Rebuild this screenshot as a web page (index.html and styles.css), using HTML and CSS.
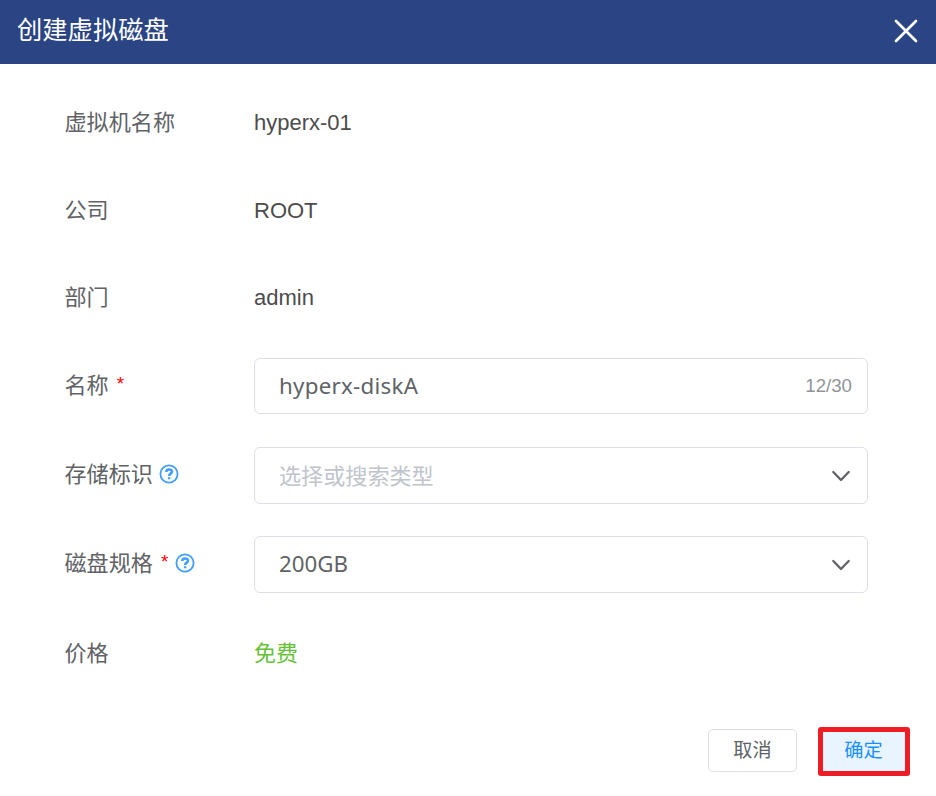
FILE: index.html
```html
<!DOCTYPE html>
<html lang="zh-CN">
<head>
<meta charset="utf-8">
<title>创建虚拟磁盘</title>
<link rel="stylesheet" href="styles.css">
</head>
<body>
<div class="dialog">
  <header class="header">
    <h1 class="title">创建虚拟磁盘</h1>
    <svg class="close" viewBox="0 0 24 24"><path d="M2 2 22 22M22 2 2 22"/></svg>
  </header>
  <main class="form">
    <div class="row"><div class="label">虚拟机名称</div><div class="value">hyperx-01</div></div>
    <div class="row"><div class="label">公司</div><div class="value">ROOT</div></div>
    <div class="row short"><div class="label">部门</div><div class="value">admin</div></div>
    <div class="row name-row"><div class="label">名称<span class="star">*</span></div>
      <div class="field"><span class="text name">hyperx-diskA</span><span class="count">12/30</span></div></div>
    <div class="row tall raised"><div class="label">存储标识<svg class="help" viewBox="0 0 20 20"><circle cx="10" cy="10" r="8.6"/><path d="M7.3 8.1C7.3 4.5 13 4.7 13 7.8 13 9.8 10.2 9.6 10.2 12"/><path class="dot" d="M8.9 13.2h2.5v2.1H8.9z"/></svg></div>
      <div class="field"><span class="placeholder">选择或搜索类型</span><svg class="arrow" viewBox="0 0 20 12"><path d="M2.3 2 10 10 17.7 2"/></svg></div></div>
    <div class="row tall raised"><div class="label">磁盘规格<span class="star">*</span><svg class="help" viewBox="0 0 20 20"><circle cx="10" cy="10" r="8.6"/><path d="M7.3 8.1C7.3 4.5 13 4.7 13 7.8 13 9.8 10.2 9.6 10.2 12"/><path class="dot" d="M8.9 13.2h2.5v2.1H8.9z"/></svg></div>
      <div class="field"><span class="text">200GB</span><svg class="arrow" viewBox="0 0 20 12"><path d="M2.3 2 10 10 17.7 2"/></svg></div></div>
    <div class="row tall"><div class="label">价格</div><div class="value free">免费</div></div>
  </main>
  <footer class="footer">
    <button class="cancel">取消</button>
    <button class="confirm">确定</button>
  </footer>
</div>
</body>
</html>
```
FILE: styles.css
```css
* { box-sizing: border-box; }
body { margin: 0; background: #fff; font-family: "Liberation Sans", "Noto Sans CJK SC", sans-serif; color: #606266; }
.dialog { width: 936px; height: 796px; overflow: hidden; }
.header { height: 64px; padding: 0 18px 4px 17px; background: #2a4484; display: flex; align-items: center; justify-content: space-between; }
.title { margin: 0; font-size: 25.3px; line-height: 36px; font-weight: 400; color: #fff; }
.close { width: 24px; height: 24px; margin-top: 2px; fill: none; stroke: #fff; stroke-width: 2.7; stroke-linecap: round; }
.form { padding: 31px 68px 0 64.5px; display: flex; flex-direction: column; gap: 32px; }
.row { height: 56px; display: grid; grid-template-columns: 189.5px 1fr; align-items: center; font-size: 22.1px; line-height: 32px; }
.short { height: 55px; padding-bottom: 1px; }
.name-row { margin-bottom: 1px; }
.tall { height: 57px; }
.raised .label { padding-bottom: 2px; }
.label { display: flex; align-items: center; height: 32px; }
.value { color: #4c4c4c; font-size: 22px; }
.free { color: #67c23a; }
.star { color: #f00; margin-left: 8px; font-size: 19px; height: 36px; }
.help { width: 20px; height: 20px; margin: 0 0 1px 6px; fill: none; stroke: #409eff; stroke-width: 1.8; }
.star + .help { margin-left: 7px; }
.help path { stroke-width: 2.6; }
.help .dot { fill: #409eff; stroke: none; }
.field { height: 100%; border: 1px solid #dcdfe6; border-radius: 6px; padding: 0 15px 0 24px; display: flex; align-items: center; justify-content: space-between; }
.text { font-family: "Noto Sans", sans-serif; font-size: 22.3px; padding-bottom: 1px; }
.name { letter-spacing: .27px; padding-bottom: 0; }
.placeholder { color: #c0c4cc; padding-top: 2px; }
.count { font-size: 18.7px; color: #909399; }
.arrow { width: 20px; height: 12px; margin: 1px 1px 0 0; fill: none; stroke: #606266; stroke-width: 2.3; stroke-linecap: round; stroke-linejoin: round; }
.footer { display: flex; justify-content: flex-end; align-items: flex-start; gap: 21px; padding: 45px 26px 0 0; }
button { font: 19.2px/28px "Liberation Sans", "Noto Sans CJK SC", sans-serif; padding: 0 1px 2px 0; }
.cancel { width: 89px; height: 43px; margin-top: 2px; padding: 0; border: 1px solid #dcdfe6; border-radius: 5px; background: #fff; color: #606266; }
.confirm { width: 92px; height: 49px; border: 5px solid #ee1c25; border-radius: 3px; background: #e8f4ff; color: #1890ff; }
```
